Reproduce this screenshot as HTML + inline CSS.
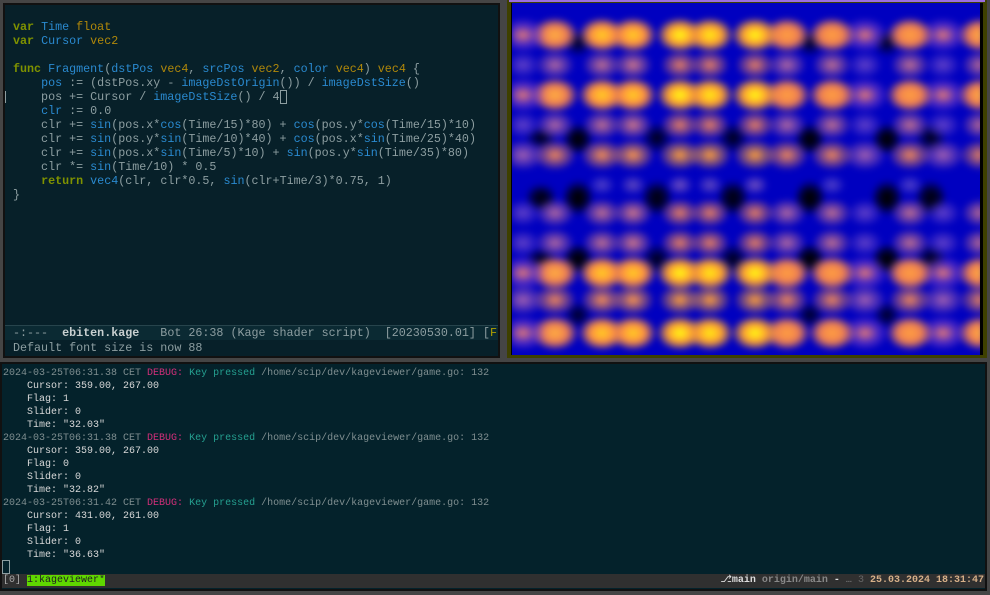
<!DOCTYPE html>
<html><head><meta charset="utf-8"><style>
*{margin:0;padding:0;box-sizing:border-box}
body{width:990px;height:595px;background:#454545;position:relative;overflow:hidden;font-family:"Liberation Mono",monospace;font-size:11.7px}
.pane{position:absolute}
pre{font-family:"Liberation Mono",monospace;font-size:11.7px;white-space:pre}
#emacs{left:3px;top:3px;width:497px;height:355px;background:#111;padding:2px}
#emacs .in{position:absolute;left:2px;top:2px;right:2px;bottom:2px;background:#072029}
#code{position:absolute;left:8px;top:15px;line-height:14px;color:#8d9ea1}
.k{color:#7f9200;font-weight:bold}.f{color:#2a8ad0}.t{color:#b0880a}.p{color:#8d9ea1}
#mode{position:absolute;left:0;right:0;top:320px;height:15px;background:#0b2a33;border-top:1px solid #27444c;color:#8d9ea1;line-height:14px;padding-left:8px}
#echo{position:absolute;left:8px;top:336px;color:#8d9ea1;line-height:14px}
#img{left:507px;top:0;width:480px;height:358px;background:#3e4000;padding:2px}
#img .top{position:absolute;left:2px;right:2px;top:0;height:2px;background:#9b6ee0}
#shader{position:absolute;left:4px;top:3px;width:472px;height:352px;background:#0000c0;overflow:hidden}
#blur{position:absolute;left:-10px;top:-10px;width:492px;height:372px;filter:blur(3px)}
.row{position:absolute;left:10px;width:472px;height:60px;background-repeat:no-repeat}
#term{left:0;top:362px;width:987px;height:229px;background:#111;padding:0 2px 2px 2px}
#term .in{position:absolute;left:2px;top:2px;right:2px;bottom:2px;background:#04222b}
#log{position:absolute;left:1px;top:3px;line-height:13px;color:#d8d8d8;font-size:10px}
.g{color:#7f8e90}.d{color:#d32f7a}.c{color:#25a090}
#status{position:absolute;left:0;right:0;top:210px;height:14px;background:#303030;line-height:14px;color:#bbb}
#status pre{font-size:10px}
</style></head><body>

<div class="pane" id="emacs"><div class="in">
<pre id="code"><span class="k">var</span> <span class="f">Time</span> <span class="t">float</span>
<span class="k">var</span> <span class="f">Cursor</span> <span class="t">vec2</span>

<span class="k">func</span> <span class="f">Fragment</span>(<span class="f">dstPos</span> <span class="t">vec4</span>, <span class="f">srcPos</span> <span class="t">vec2</span>, <span class="f">color</span> <span class="t">vec4</span>) <span class="t">vec4</span> {
    <span class="f">pos</span> := (dstPos.xy - <span class="f">imageDstOrigin</span>()) / <span class="f">imageDstSize</span>()
    pos += Cursor / <span class="f">imageDstSize</span>() / 4<span style="outline:1px solid #8d9ea1;outline-offset:-1px">&nbsp;</span>
    <span class="f">clr</span> := 0.0
    clr += <span class="f">sin</span>(pos.x*<span class="f">cos</span>(Time/15)*80) + <span class="f">cos</span>(pos.y*<span class="f">cos</span>(Time/15)*10)
    clr += <span class="f">sin</span>(pos.y*<span class="f">sin</span>(Time/10)*40) + <span class="f">cos</span>(pos.x*<span class="f">sin</span>(Time/25)*40)
    clr += <span class="f">sin</span>(pos.x*<span class="f">sin</span>(Time/5)*10) + <span class="f">sin</span>(pos.y*<span class="f">sin</span>(Time/35)*80)
    clr *= <span class="f">sin</span>(Time/10) * 0.5
    <span class="k">return</span> <span class="f">vec4</span>(clr, clr*0.5, <span class="f">sin</span>(clr+Time/3)*0.75, 1)
}</pre>
<div style="position:absolute;left:0;top:86px;width:1px;height:12px;background:#8d9ea1"></div>
<pre id="mode">-:---  <b style="color:#c8d0d0">ebiten.kage</b>   Bot 26:38 (Kage shader script)  [20230530.01] [<span style="color:#b0a000">F</span></pre>
<pre id="echo">Default font size is now 88</pre>
</div></div>

<div class="pane" id="img"><div class="top"></div>
<div id="shader"><div id="blur">
<style>
.A{background-image:
radial-gradient(24px 18px at 12px 50%,#e07878,rgba(150,80,200,.5) 55%,rgba(0,0,192,0)),
radial-gradient(24px 18px at 44px 50%,#ffb040,#f08050 50%,rgba(0,0,192,0)),
radial-gradient(24px 18px at 91px 50%,#ffd020,#ff9040 50%,rgba(0,0,192,0)),
radial-gradient(24px 18px at 122px 50%,#ffd020,#ff9040 50%,rgba(0,0,192,0)),
radial-gradient(24px 18px at 169px 50%,#ffff10,#ffa030 50%,rgba(0,0,192,0)),
radial-gradient(24px 18px at 199px 50%,#ffee10,#ffa030 50%,rgba(0,0,192,0)),
radial-gradient(24px 18px at 244px 50%,#ffff10,#ffa030 50%,rgba(0,0,192,0)),
radial-gradient(24px 18px at 276px 50%,#ffa040,#f08050 50%,rgba(0,0,192,0)),
radial-gradient(24px 18px at 321px 50%,#ffa040,#f08050 50%,rgba(0,0,192,0)),
radial-gradient(24px 18px at 354px 50%,#e07878,rgba(150,80,200,.5) 55%,rgba(0,0,192,0)),
radial-gradient(24px 18px at 399px 50%,#ffa040,#f08050 50%,rgba(0,0,192,0)),
radial-gradient(24px 18px at 432px 50%,#e07878,rgba(150,80,200,.5) 55%,rgba(0,0,192,0)),
radial-gradient(24px 18px at 470px 50%,#ffb040,#f08050 50%,rgba(0,0,192,0))}
.B{background-image:
radial-gradient(22px 16px at 12px 50%,#a060b0,rgba(0,0,192,0)),
radial-gradient(22px 16px at 44px 50%,#f08858,rgba(0,0,192,0)),
radial-gradient(22px 16px at 91px 50%,#f89050,rgba(0,0,192,0)),
radial-gradient(22px 16px at 122px 50%,#ff9848,rgba(0,0,192,0)),
radial-gradient(22px 16px at 169px 50%,#ffa038,rgba(0,0,192,0)),
radial-gradient(22px 16px at 199px 50%,#ffa038,rgba(0,0,192,0)),
radial-gradient(22px 16px at 244px 50%,#ffa038,rgba(0,0,192,0)),
radial-gradient(22px 16px at 276px 50%,#f08858,rgba(0,0,192,0)),
radial-gradient(22px 16px at 321px 50%,#f08858,rgba(0,0,192,0)),
radial-gradient(22px 16px at 354px 50%,#a060b0,rgba(0,0,192,0)),
radial-gradient(22px 16px at 399px 50%,#f08858,rgba(0,0,192,0)),
radial-gradient(22px 16px at 432px 50%,#a060b0,rgba(0,0,192,0)),
radial-gradient(22px 16px at 470px 50%,#f08858,rgba(0,0,192,0))}
.C{background-image:
radial-gradient(18px 14px at 12px 50%,#6040c8,rgba(0,0,192,0)),
radial-gradient(20px 15px at 44px 50%,#b068a0,rgba(0,0,192,0)),
radial-gradient(20px 15px at 91px 50%,#c07090,rgba(0,0,192,0)),
radial-gradient(20px 15px at 122px 50%,#d07888,rgba(0,0,192,0)),
radial-gradient(20px 15px at 169px 50%,#e88060,rgba(0,0,192,0)),
radial-gradient(20px 15px at 199px 50%,#e88060,rgba(0,0,192,0)),
radial-gradient(20px 15px at 244px 50%,#e88060,rgba(0,0,192,0)),
radial-gradient(20px 15px at 276px 50%,#b068a0,rgba(0,0,192,0)),
radial-gradient(20px 15px at 321px 50%,#c07090,rgba(0,0,192,0)),
radial-gradient(18px 14px at 354px 50%,#6040c8,rgba(0,0,192,0)),
radial-gradient(20px 15px at 399px 50%,#c07090,rgba(0,0,192,0)),
radial-gradient(18px 14px at 432px 50%,#6040c8,rgba(0,0,192,0)),
radial-gradient(20px 15px at 470px 50%,#c07090,rgba(0,0,192,0))}
.D{background-image:
radial-gradient(14px 11px at 91px 50%,#5040c8,rgba(0,0,192,0)),
radial-gradient(14px 11px at 122px 50%,#6048c0,rgba(0,0,192,0)),
radial-gradient(14px 11px at 169px 50%,#7050c0,rgba(0,0,192,0)),
radial-gradient(14px 11px at 199px 50%,#6048c0,rgba(0,0,192,0)),
radial-gradient(14px 11px at 244px 50%,#7050c0,rgba(0,0,192,0)),
radial-gradient(14px 11px at 321px 50%,#5040c8,rgba(0,0,192,0)),
radial-gradient(14px 11px at 399px 50%,#5040c8,rgba(0,0,192,0))}
.X{background-image:
radial-gradient(16px 16px at 67px 50%,#000,rgba(0,0,192,0)),
radial-gradient(16px 16px at 146px 50%,#000010,rgba(0,0,192,0)),
radial-gradient(16px 16px at 222px 50%,#000010,rgba(0,0,192,0)),
radial-gradient(16px 16px at 299px 50%,#000,rgba(0,0,192,0)),
radial-gradient(16px 16px at 376px 50%,#000,rgba(0,0,192,0)),
radial-gradient(16px 16px at 420px 50%,#000010,rgba(0,0,192,0)),
radial-gradient(16px 12px at 30px 50%,#000010,rgba(0,0,192,0))}
.Y{background-image:
radial-gradient(14px 14px at 67px 50%,#000020,rgba(0,0,192,0)),
radial-gradient(14px 14px at 299px 50%,#000020,rgba(0,0,192,0)),
radial-gradient(14px 14px at 376px 50%,#000020,rgba(0,0,192,0))}
</style>
<div class="row Y" style="top:20px"></div>
<div class="row Y" style="top:118px"></div>
<div class="row X" style="top:115px"></div>
<div class="row X" style="top:172px"></div>
<div class="row X" style="top:178px"></div>
<div class="row Y" style="top:236px"></div>
<div class="row X" style="top:236px"></div>
<div class="row Y" style="top:292px"></div>
<div class="row A" style="top:12px"></div>
<div class="row C" style="top:42px"></div>
<div class="row A" style="top:72px"></div>
<div class="row C" style="top:102px"></div>
<div class="row B" style="top:132px"></div>
<div class="row D" style="top:162px"></div>
<div class="row C" style="top:190px"></div>
<div class="row C" style="top:220px"></div>
<div class="row A" style="top:250px"></div>
<div class="row B" style="top:277px"></div>
<div class="row A" style="top:310px"></div>
</div>
<div style="position:absolute;right:0;top:0;width:3px;height:352px;background:#000"></div>
<div style="position:absolute;left:0;top:0;width:1px;height:352px;background:#000"></div>
</div>
</div>

<div class="pane" id="term"><div class="in">
<pre id="log"><span class="g">2024-03-25T06:31.38 CET</span> <span class="d">DEBUG:</span> <span class="c">Key pressed</span> <span class="g">/home/scip/dev/kageviewer/game.go: 132</span>
    Cursor: 359.00, 267.00
    Flag: 1
    Slider: 0
    Time: "32.03"
<span class="g">2024-03-25T06:31.38 CET</span> <span class="d">DEBUG:</span> <span class="c">Key pressed</span> <span class="g">/home/scip/dev/kageviewer/game.go: 132</span>
    Cursor: 359.00, 267.00
    Flag: 0
    Slider: 0
    Time: "32.82"
<span class="g">2024-03-25T06:31.42 CET</span> <span class="d">DEBUG:</span> <span class="c">Key pressed</span> <span class="g">/home/scip/dev/kageviewer/game.go: 132</span>
    Cursor: 431.00, 261.00
    Flag: 1
    Slider: 0
    Time: "36.63"</pre>
<div style="position:absolute;left:0;top:196px;width:8px;height:14px;border:1px solid #8d9ea1"></div>
<div id="status"><pre style="position:absolute;left:1px;top:0;color:#aaa">[0] <span style="background:#5fd700;color:#202020">1:kageviewer*</span></pre>
<pre style="position:absolute;right:1px;top:0;color:#888"><span style="color:#ddd">⎇<b>main</b></span> <b>origin/main</b> <b style="color:#ddd">-</b> … <span style="color:#666">3</span> <b style="color:#d7b089">25.03.2024 18:31:47</b></pre></div>
</div></div>
</body></html>
